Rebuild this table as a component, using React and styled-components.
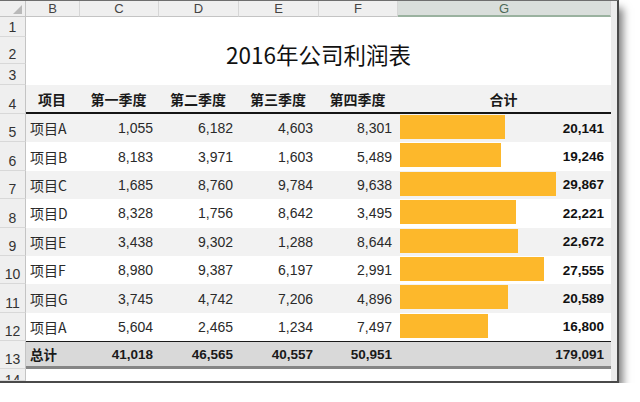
import React from 'react';
import styled, { createGlobalStyle, css } from 'styled-components';

const GlobalStyle = createGlobalStyle`
  html, body { margin: 0; padding: 0; background: #ffffff; }
  body { font-family: "Liberation Sans", "Noto Sans CJK SC", sans-serif; }
`;

const Window = styled.div`
  display: flex;
  width: 619px;
  height: 383px;
  box-sizing: border-box;
  background: #ffffff;
  border-top: 1px solid #6e6e6e;
  border-right: 2px solid #4a4a4a;
  border-bottom: 2px solid #4a4a4a;
  box-shadow: 5px 7px 8px -1px rgba(0, 0, 0, 0.5);
  overflow: hidden;
`;

const Sheet = styled.div`
  display: grid;
  grid-template-columns: 26px 54px 79px 80px 80px 79px 213px;
  grid-template-rows: 16px 20px 27px 21px 29px repeat(8, 28.4px) 28px 1fr;
  width: 611px;
  height: 100%;
`;

const Strip = styled.div`
  width: 6px;
  height: 100%;
  background: #ececec;
`;

const Corner = styled.div`
  background: #efefef;
  border-right: 1px solid #c4c4c4;
  border-bottom: 1px solid #c4c4c4;
  box-sizing: border-box;
  display: flex;
  align-items: flex-end;
  justify-content: flex-end;
  padding: 0 3px 2px 0;
`;

const ColHead = styled.div`
  box-sizing: border-box;
  display: flex;
  align-items: center;
  justify-content: center;
  font-size: 13px;
  color: #444;
  background: #efefef;
  border-right: 1px solid #d6d6d6;
  border-bottom: 1px solid #c4c4c4;
  ${(p) =>
    p.$selected &&
    css`
      background: #d9dedb;
      color: #4d6a58;
      border-bottom: 2px solid #9ab29f;
    `}
`;

const RowHead = styled.div`
  box-sizing: border-box;
  display: flex;
  align-items: ${(p) => (p.$cut ? 'flex-start' : 'flex-end')};
  justify-content: center;
  padding-bottom: 1px;
  padding-top: ${(p) => (p.$cut ? '3px' : '0')};
  font-size: 14px;
  color: #333;
  background: #efefef;
  border-right: 1px solid #c4c4c4;
  border-bottom: 1px solid #d8d8d8;
  overflow: hidden;
  line-height: 16px;
`;

const Cell = styled.div`
  box-sizing: border-box;
  display: flex;
  align-items: center;
  justify-content: ${(p) => p.$align || 'flex-start'};
  padding: 0 6px 0 4px;
  font-size: 14px;
  color: #2a2a2a;
  white-space: nowrap;
  background: ${(p) => p.$bg || 'transparent'};
  font-family: ${(p) =>
    p.$cjk ? '"Noto Sans CJK SC", sans-serif' : '"Liberation Sans", "Noto Sans CJK SC", sans-serif'};
  font-weight: ${(p) => (p.$bold ? 700 : 400)};
  ${(p) =>
    p.$head &&
    css`
      border-bottom: 2px solid #151515;
      color: #1a1a1a;
    `}
  ${(p) =>
    p.$total &&
    css`
      border-top: 1px solid #1a1a1a;
      border-bottom: 3px solid #858585;
      color: #1a1a1a;
      font-size: 13.5px;
    `}
`;

const Title = styled.div`
  grid-column: span 6;
  display: flex;
  align-items: flex-end;
  justify-content: center;
  font-family: "Noto Sans CJK SC", sans-serif;
  font-size: 22.5px;
  line-height: 24px;
  color: #111;
  margin-bottom: -2px;
`;

const BarCell = styled(Cell)`
  padding: 0 7px 0 2px;
  align-items: center;
`;

const Bar = styled.div`
  height: 24px;
  align-self: flex-start;
  margin-top: 1px;
  background: #fdb82b;
  flex: none;
`;

const Amount = styled.span`
  margin-left: auto;
  font-weight: 700;
  font-size: 13.5px;
  color: #111;
`;

const data = [
  ['项目A', 1055, 6182, 4603, 8301, 20141],
  ['项目B', 8183, 3971, 1603, 5489, 19246],
  ['项目C', 1685, 8760, 9784, 9638, 29867],
  ['项目D', 8328, 1756, 8642, 3495, 22221],
  ['项目E', 3438, 9302, 1288, 8644, 22672],
  ['项目F', 8980, 9387, 6197, 2991, 27555],
  ['项目G', 3745, 4742, 7206, 4896, 20589],
  ['项目A', 5604, 2465, 1234, 7497, 16800],
];

const fmt = (n) => n.toLocaleString('en-US');
const MAX = 29867;
const FULL = 156;

const headers = ['项目', '第一季度', '第二季度', '第三季度', '第四季度', '合计'];
const letters = ['B', 'C', 'D', 'E', 'F', 'G'];

export default function App() {
  const totals = [1, 2, 3, 4, 5].map((i) => data.reduce((s, r) => s + r[i], 0));
  const gray = '#f2f2f2';
  return (
    <>
      <GlobalStyle />
      <Window>
        <Sheet>
          <Corner>
            <svg width="9" height="9" viewBox="0 0 9 9">
              <polygon points="9,0 9,9 0,9" fill="#b9b9b9" />
            </svg>
          </Corner>
          {letters.map((l) => (
            <ColHead key={l} $selected={l === 'G'}>
              {l}
            </ColHead>
          ))}

          <RowHead>1</RowHead>
          {letters.map((l) => (
            <Cell key={'r1' + l} />
          ))}

          <RowHead>2</RowHead>
          <Title>2016年公司利润表</Title>

          <RowHead>3</RowHead>
          {letters.map((l) => (
            <Cell key={'r3' + l} />
          ))}

          <RowHead>4</RowHead>
          {headers.map((h) => (
            <Cell key={h} $head $bold $cjk $bg={gray} $align="center">
              {h}
            </Cell>
          ))}

          {data.map((r, i) => {
            const bg = i % 2 === 0 ? gray : '#ffffff';
            return (
              <React.Fragment key={i}>
                <RowHead>{i + 5}</RowHead>
                <Cell $cjk $bg={bg}>
                  {r[0]}
                </Cell>
                {r.slice(1, 5).map((v, j) => (
                  <Cell key={j} $bg={bg} $align="flex-end">
                    {fmt(v)}
                  </Cell>
                ))}
                <BarCell $bg={bg}>
                  <Bar style={{ width: `${(r[5] / MAX) * FULL}px` }} />
                  <Amount>{fmt(r[5])}</Amount>
                </BarCell>
              </React.Fragment>
            );
          })}

          <RowHead>13</RowHead>
          <Cell $total $bold $cjk $bg="#d9d9d9">
            总计
          </Cell>
          {totals.slice(0, 4).map((v, j) => (
            <Cell key={j} $total $bold $bg="#d9d9d9" $align="flex-end">
              {fmt(v)}
            </Cell>
          ))}
          <Cell $total $bold $bg="#d9d9d9" $align="flex-end" style={{ paddingRight: 7 }}>
            {fmt(totals[4])}
          </Cell>

          <RowHead $cut>14</RowHead>
          {letters.map((l) => (
            <Cell key={'r14' + l} />
          ))}
        </Sheet>
        <Strip />
      </Window>
    </>
  );
}
